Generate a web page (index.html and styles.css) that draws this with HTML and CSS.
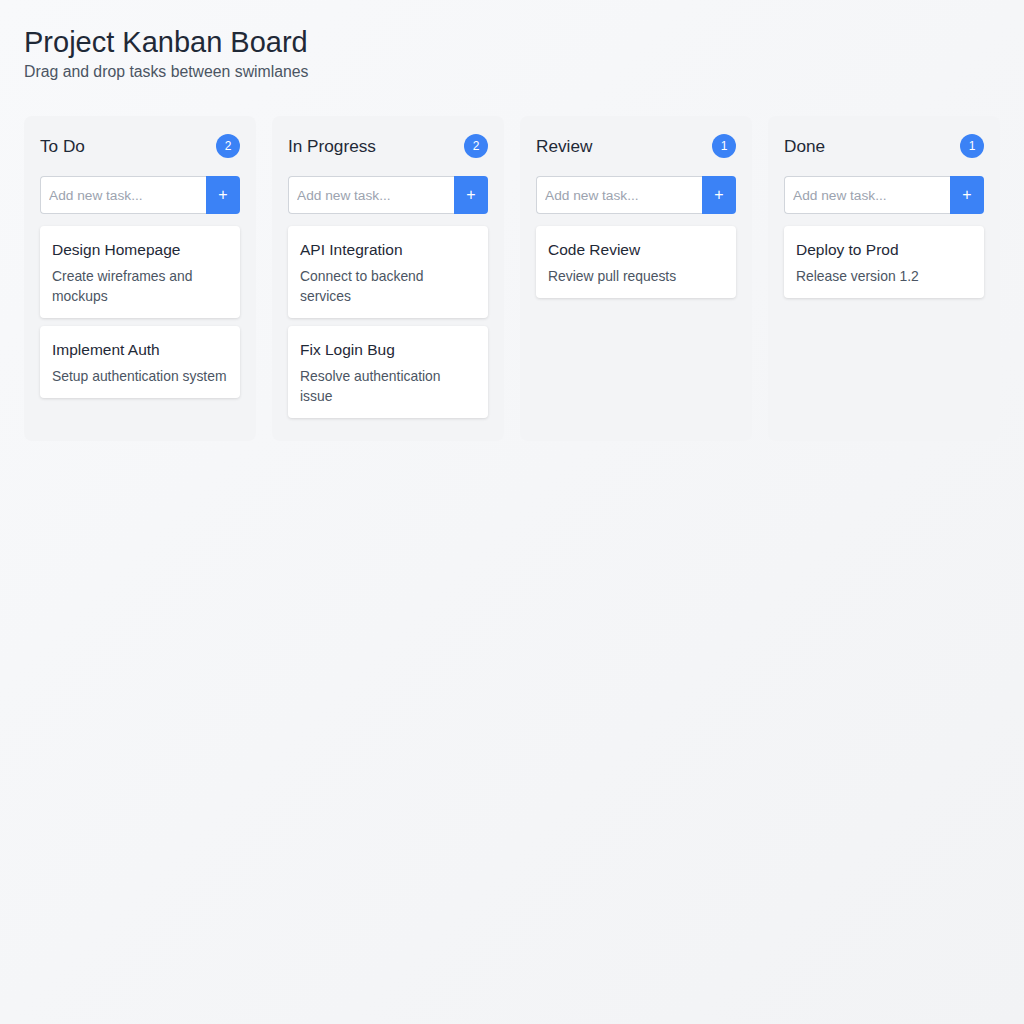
FILE: index.html
```html
<!DOCTYPE html>
<html lang="en">
<head>
<meta charset="utf-8">
<title>Project Kanban Board</title>
<link rel="stylesheet" href="styles.css">
</head>
<body>
<div class="page">
  <header class="page-header">
    <h1 class="title">Project Kanban Board</h1>
    <p class="subtitle">Drag and drop tasks between swimlanes</p>
  </header>
  <main class="board">
    <section class="lane">
      <div class="lane-head"><h2 class="lane-title">To Do</h2><span class="badge">2</span></div>
      <form class="add-row"><input class="add-input" type="text" placeholder="Add new task..."><button class="add-btn" type="button">+</button></form>
      <div class="cards">
        <div class="card"><div class="card-title">Design Homepage</div><div class="card-desc">Create wireframes and mockups</div></div>
        <div class="card"><div class="card-title">Implement Auth</div><div class="card-desc">Setup authentication system</div></div>
      </div>
    </section>
    <section class="lane">
      <div class="lane-head"><h2 class="lane-title">In Progress</h2><span class="badge">2</span></div>
      <form class="add-row"><input class="add-input" type="text" placeholder="Add new task..."><button class="add-btn" type="button">+</button></form>
      <div class="cards">
        <div class="card"><div class="card-title">API Integration</div><div class="card-desc">Connect to backend services</div></div>
        <div class="card"><div class="card-title">Fix Login Bug</div><div class="card-desc">Resolve authentication issue</div></div>
      </div>
    </section>
    <section class="lane">
      <div class="lane-head"><h2 class="lane-title">Review</h2><span class="badge">1</span></div>
      <form class="add-row"><input class="add-input" type="text" placeholder="Add new task..."><button class="add-btn" type="button">+</button></form>
      <div class="cards">
        <div class="card"><div class="card-title">Code Review</div><div class="card-desc">Review pull requests</div></div>
      </div>
    </section>
    <section class="lane">
      <div class="lane-head"><h2 class="lane-title">Done</h2><span class="badge">1</span></div>
      <form class="add-row"><input class="add-input" type="text" placeholder="Add new task..."><button class="add-btn" type="button">+</button></form>
      <div class="cards">
        <div class="card"><div class="card-title">Deploy to Prod</div><div class="card-desc">Release version 1.2</div></div>
      </div>
    </section>
  </main>
</div>
</body>
</html>
```
FILE: styles.css
```css
* { box-sizing: border-box; }
html, body { margin: 0; padding: 0; }
body {
  min-height: 1024px;
  font-family: "Liberation Sans", Arial, sans-serif;
  background: linear-gradient(135deg, #f8f9fb 0%, #f2f3f5 100%);
  color: #1f2937;
}
.page { padding: 24px; }
.page-header { margin-bottom: 32px; }
.title {
  margin: 0;
  font-size: 29px;
  font-weight: 400;
  line-height: 36px;
  color: #1f2937;
}
.subtitle {
  margin: 0;
  font-size: 15.8px;
  line-height: 24px;
  color: #4b5563;
}
.board {
  display: grid;
  grid-template-columns: repeat(4, minmax(0, 1fr));
  gap: 16px;
  align-items: stretch;
}
.lane {
  min-width: 0;
  background: #f3f4f6;
  border-radius: 8px;
  padding: 16px 16px 23px;
}
.lane-head {
  display: flex;
  justify-content: space-between;
  align-items: center;
  height: 26px;
  margin-top: 1px;
  margin-bottom: 17px;
}
.lane-title {
  margin: 0;
  font-size: 17.2px;
  font-weight: 400;
  color: #1f2937;
}
.badge {
  width: 24px;
  height: 24px;
  border-radius: 50%;
  background: #3b82f6;
  color: #fff;
  font-size: 12px;
  display: flex;
  align-items: center;
  justify-content: center;
}
.add-row {
  display: flex;
  margin: 0 0 12px;
  height: 38px;
}
.add-input {
  flex: 1;
  min-width: 0;
  width: 0;
  height: 38px;
  border: 1px solid #d1d5db;
  border-right: none;
  border-radius: 4px 0 0 4px;
  padding: 0 8px;
  font-family: inherit;
  font-size: 13.7px;
  color: #1f2937;
  background: #fff;
}
.add-input::placeholder { color: #9ca3af; }
.add-btn {
  flex: 0 0 34px;
  width: 34px;
  height: 38px;
  border: none;
  border-radius: 0 4px 4px 0;
  background: #3b82f6;
  color: #fff;
  font-family: inherit;
  font-size: 16px;
  padding: 0;
}
.cards {
  display: flex;
  flex-direction: column;
  gap: 8px;
}
.card {
  background: #fff;
  border-radius: 4px;
  padding: 12px;
  box-shadow: 0 1px 3px rgba(0, 0, 0, 0.12);
}
.card-title {
  font-size: 15.5px;
  line-height: 24px;
  color: #1f2937;
  margin-bottom: 4px;
}
.card-desc {
  font-size: 13.9px;
  line-height: 20px;
  color: #4b5563;
}
```
